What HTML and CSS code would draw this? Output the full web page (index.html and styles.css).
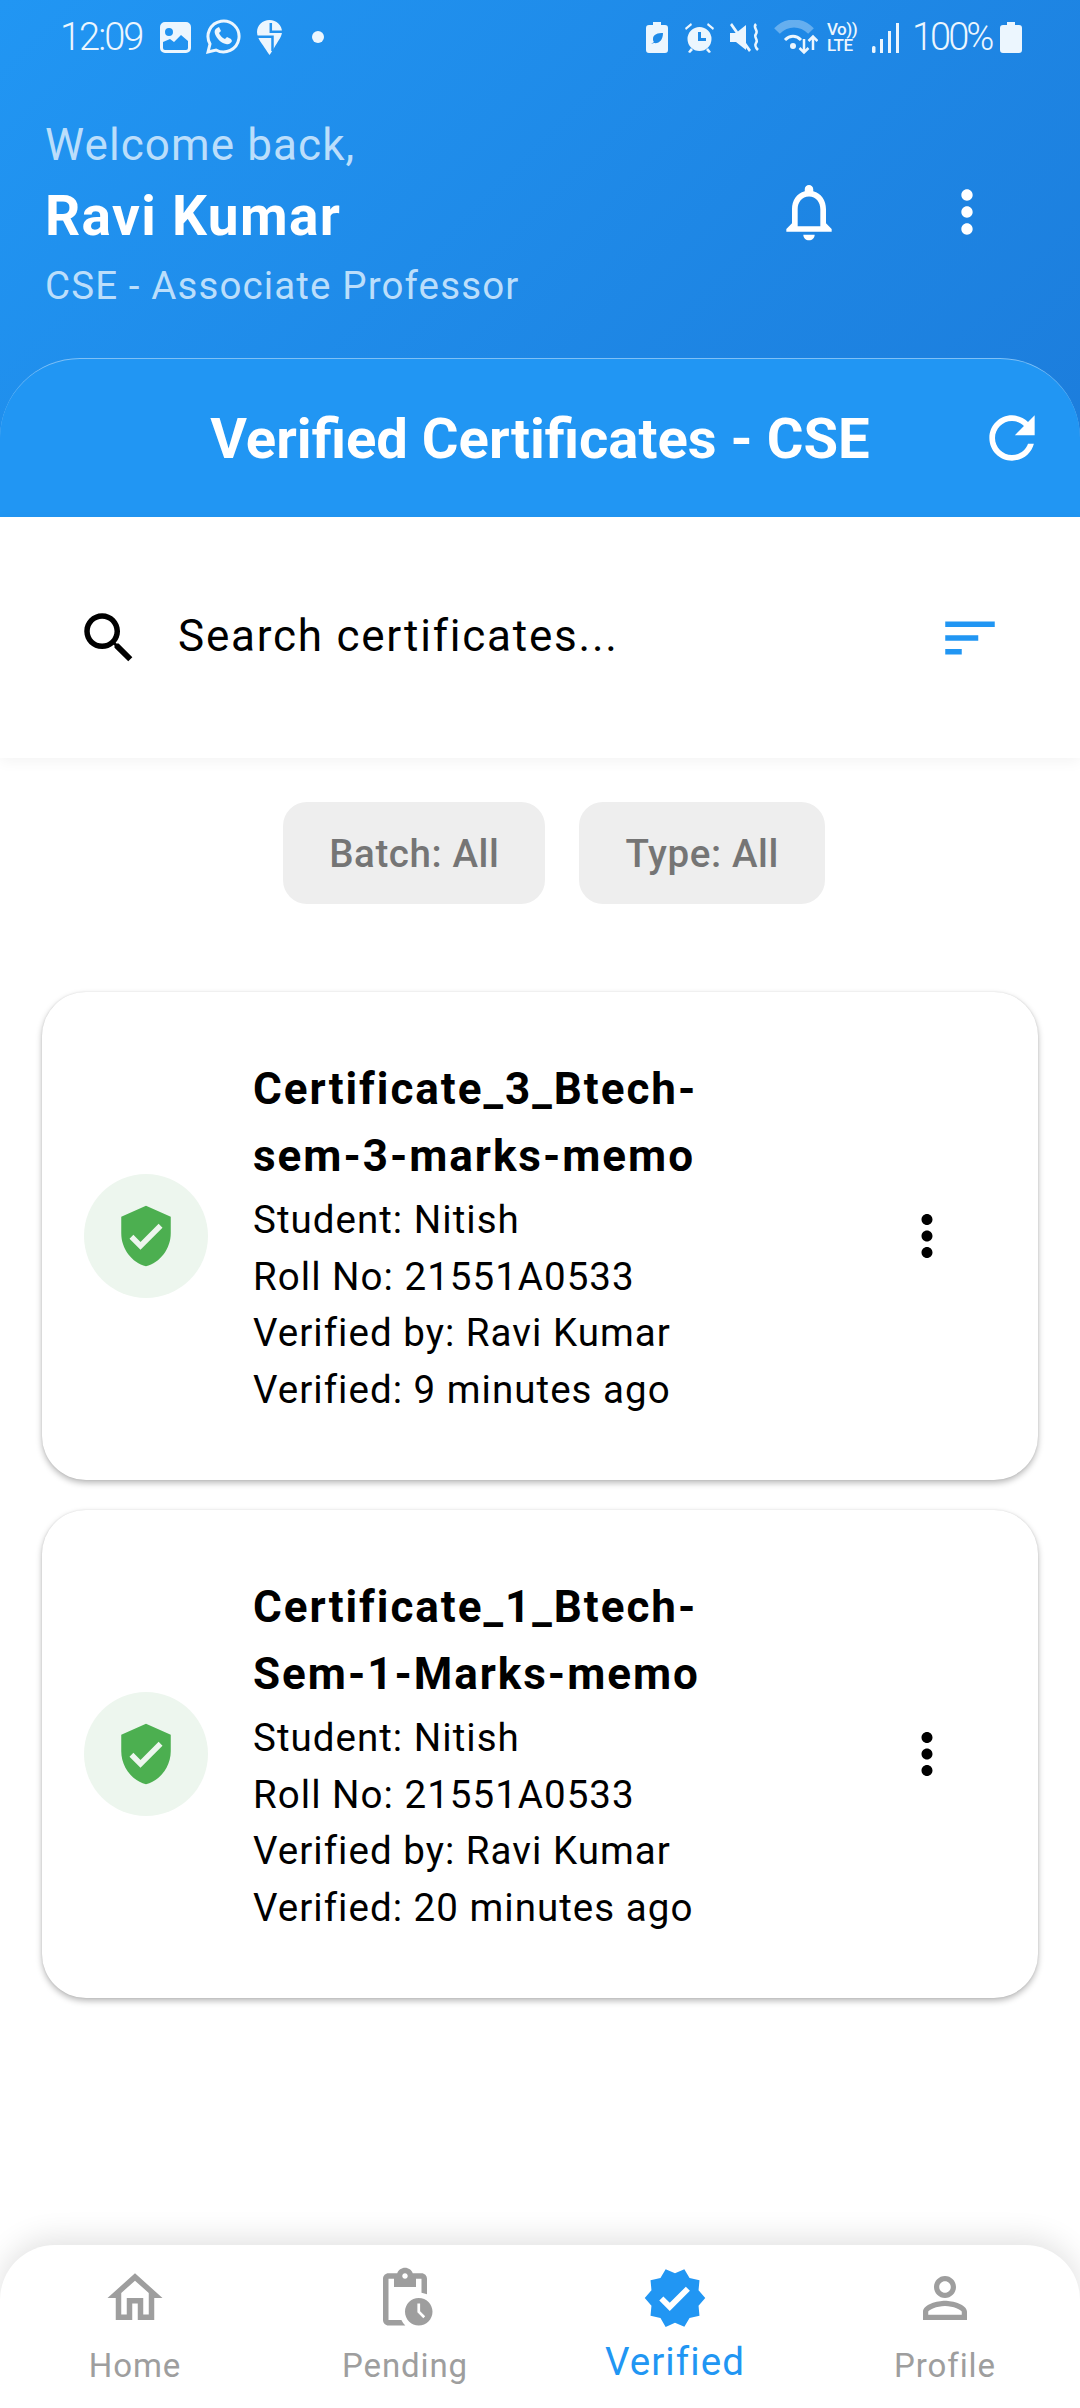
FILE: index.html
```html
<!DOCTYPE html>
<html lang="en">
<head>
  <meta charset="UTF-8" />
  <title>Verified Certificates</title>
  <link rel="stylesheet" href="styles.css">
</head>
<body>
  <header class="top">
    <div class="status">
      <span class="clock">12:09</span>
      <svg class="st st-img" viewBox="0 0 31 31"><path fill-rule="evenodd" d="M5 0h21a5 5 0 0 1 5 5v21a5 5 0 0 1-5 5H5a5 5 0 0 1-5-5V5a5 5 0 0 1 5-5zM9 6a4 4 0 1 0 0 8 4 4 0 0 0 0-8zM3 20v6a2 2 0 0 0 2 2h21a2 2 0 0 0 2-2v-7l-7-6-7 7-4-3z"/></svg>
      <svg class="st st-wa" viewBox="0 0 36 36"><path fill="none" stroke="currentColor" stroke-width="3" d="M3 33l2-8A15.500 15.500 0 1 1 11 31z"/><path d="M12 9c-2 1-3 3-2 6 2 5 6 9 11 10 3 1 5-1 6-3l-1-2-4-2-2 2c-3-1-5-4-6-6l2-2-2-4z"/></svg>
      <svg class="st st-sw" viewBox="0 0 25 35"><path d="M12.500 0C5.500 0 0 5 0 12c0 4 2 8 5 12 3 4 6 9 7.500 11 1.500-2 4-6 6-9.500 3-5 6.500-9.500 6.500-13.500C25 5 19.500 0 12.500 0z"/><path fill="none" stroke="#2192ef" stroke-width="2.500" d="M13.800 3v8.700H25M0 16.700h15.500V31"/></svg>
      <span class="st-dot"></span>
      <span class="status-gap"></span>
      <svg class="st st-eco" viewBox="0 0 22 31"><path fill-rule="evenodd" d="M7 0h8v3h4a3 3 0 0 1 3 3v22a3 3 0 0 1-3 3H3a3 3 0 0 1-3-3V6a3 3 0 0 1 3-3h4zM5 22l3-1c5 1 9-3 9-10-5 0-10 1-10 6 0 1 0 2 1 3z"/></svg>
      <svg class="st st-alarm" viewBox="0 0 29 31"><path fill-rule="evenodd" d="M14.500 5a12 12 0 1 1 0 24 12 12 0 0 1 0-24zM13 10v9h8v-3h-5v-6zM0 6l6-5 1 2-6 5zM29 6l-6-5-1 2 6 5zM3 30l3-4 2 2-3 3zM26 30l-3-4-2 2 3 3z"/></svg>
      <svg class="st st-mute" viewBox="0 0 30 31"><path d="M0 11h6L16 3v25L6 20H0zM0 3l2-2 19 27-2 2z"/><path fill="none" stroke="currentColor" stroke-width="2.500" d="M26 2c-4 4 3 6 0 10-3 3 3 6 0 9-2 3 0 5 2 7"/></svg>
      <svg class="st st-wifi" viewBox="0 0 44 35"><path fill="none" stroke="currentColor" stroke-width="8" opacity=".35" d="M3 11c10-10 24-10 34 0"/><path fill="none" stroke="currentColor" stroke-width="3" d="M11 20c5-5 11-5 16 0"/><circle cx="19" cy="26" r="3"/><path fill="none" stroke="currentColor" stroke-width="2.500" d="M30 19v14M25.500 28l4.500 4.500 4.500-4.500M39 30V16M34.500 21l4.500-4.500 4.500 4.500"/></svg>
      <span class="st-volte"><span>Vo))</span><span>LTE</span></span>
      <svg class="st st-sig" viewBox="0 0 27 31"><rect x="0" y="24" width="3.500" height="7" rx="1.500"/><rect x="8" y="17" width="3" height="14"/><rect x="16" y="9" width="3" height="22"/><rect x="24" y="1" width="3" height="30"/></svg>
      <span class="pct">100%</span>
      <svg class="st st-bat" viewBox="0 0 22 31"><path d="M7 0h8v3h4a3 3 0 0 1 3 3v22a3 3 0 0 1-3 3H3a3 3 0 0 1-3-3V6a3 3 0 0 1 3-3h4z"/></svg>
    </div>

    <div class="user">
      <div class="user-text">
        <div class="welcome">Welcome back,</div>
        <div class="name">Ravi Kumar</div>
        <div class="role">CSE - Associate Professor</div>
      </div>
      <svg class="ic-big bell" viewBox="0 0 24 24"><path d="M12 22c1.100 0 2-.9 2-2h-4c0 1.100.9 2 2 2zm6-6v-5c0-3.070-1.630-5.640-4.500-6.320V4c0-.83-.67-1.500-1.500-1.500s-1.500.67-1.500 1.500v.68C7.640 5.360 6 7.920 6 11v5l-2 2v1h16v-1l-2-2zm-2 1H8v-6c0-2.480 1.510-4.500 4-4.500s4 2.020 4 4.500v6z"/></svg>
      <svg class="ic-big dots" viewBox="0 0 24 24"><path d="M12 8c1.100 0 2-.9 2-2s-.9-2-2-2-2 .9-2 2 .9 2 2 2zm0 2c-1.100 0-2 .9-2 2s.9 2 2 2 2-.9 2-2-.9-2-2-2zm0 6c-1.100 0-2 .9-2 2s.9 2 2 2 2-.9 2-2-.9-2-2-2z"/></svg>
    </div>

    <div class="panel">
      <span></span>
      <h1>Verified Certificates - CSE</h1>
      <svg class="ic-big refresh" viewBox="0 0 24 24"><path d="M17.650 6.350C16.200 4.900 14.210 4 12 4c-4.420 0-7.990 3.580-7.990 8s3.570 8 7.990 8c3.730 0 6.840-2.550 7.730-6h-2.080c-.82 2.330-3.040 4-5.650 4-3.310 0-6-2.690-6-6s2.690-6 6-6c1.660 0 3.140.69 4.220 1.780L13 11h7V4l-2.350 2.350z"/></svg>
    </div>
  </header>

  <div class="search">
    <svg class="ic-search" viewBox="0 0 24 24"><path d="M15.500 14h-.79l-.28-.27C15.410 12.590 16 11.110 16 9.500 16 5.910 13.090 3 9.500 3S3 5.910 3 9.500 5.910 16 9.500 16c1.610 0 3.090-.59 4.230-1.570l.27.28v.79l5 4.990L20.490 19l-4.990-5zm-6 0C7.010 14 5 11.990 5 9.500S7.010 5 9.500 5 14 7.010 14 9.500 11.990 14 9.500 14z"/></svg>
    <span class="search-text">Search certificates...</span>
    <svg class="ic-sort" viewBox="0 0 24 24"><path d="M3 18h6v-2H3v2zM3 6v2h18V6H3zm0 7h12v-2H3v2z"/></svg>
  </div>

  <div class="chips">
    <span class="chip">Batch: All</span>
    <span class="chip">Type: All</span>
  </div>

  <main class="list">
    <article class="card">
      <div class="badge">
        <svg viewBox="0 0 24 24"><path d="M12 1L3 5v6c0 5.550 3.840 10.740 9 12 5.160-1.260 9-6.450 9-12V5l-9-4zm-2 16l-4-4 1.410-1.410L10 14.170l6.590-6.590L18 9l-8 8z"/></svg>
      </div>
      <div class="info">
        <h2>Certificate_3_Btech-<br>sem-3-marks-memo</h2>
        <p>Student: Nitish</p>
        <p>Roll No: 21551A0533</p>
        <p>Verified by: Ravi Kumar</p>
        <p>Verified: 9 minutes ago</p>
      </div>
      <svg class="card-more" viewBox="0 0 24 24"><path d="M12 8c1.100 0 2-.9 2-2s-.9-2-2-2-2 .9-2 2 .9 2 2 2zm0 2c-1.100 0-2 .9-2 2s.9 2 2 2 2-.9 2-2-.9-2-2-2zm0 6c-1.100 0-2 .9-2 2s.9 2 2 2 2-.9 2-2-.9-2-2-2z"/></svg>
    </article>

    <article class="card">
      <div class="badge">
        <svg viewBox="0 0 24 24"><path d="M12 1L3 5v6c0 5.550 3.840 10.740 9 12 5.160-1.260 9-6.450 9-12V5l-9-4zm-2 16l-4-4 1.410-1.410L10 14.170l6.590-6.590L18 9l-8 8z"/></svg>
      </div>
      <div class="info">
        <h2>Certificate_1_Btech-<br>Sem-1-Marks-memo</h2>
        <p>Student: Nitish</p>
        <p>Roll No: 21551A0533</p>
        <p>Verified by: Ravi Kumar</p>
        <p>Verified: 20 minutes ago</p>
      </div>
      <svg class="card-more" viewBox="0 0 24 24"><path d="M12 8c1.100 0 2-.9 2-2s-.9-2-2-2-2 .9-2 2 .9 2 2 2zm0 2c-1.100 0-2 .9-2 2s.9 2 2 2 2-.9 2-2-.9-2-2-2zm0 6c-1.100 0-2 .9-2 2s.9 2 2 2 2-.9 2-2-.9-2-2-2z"/></svg>
    </article>
  </main>

  <nav class="tabs">
    <div class="tab">
      <svg viewBox="0 0 24 24"><path d="M12 5.690l5 4.500V18h-2v-6H9v6H7v-7.810l5-4.500M12 3L2 12h3v8h6v-6h2v6h6v-8h3L12 3z"/></svg>
      <span>Home</span>
    </div>
    <div class="tab">
      <svg viewBox="0 0 24 24"><path d="M17 12c-2.760 0-5 2.240-5 5s2.240 5 5 5 5-2.240 5-5-2.240-5-5-5zm1.650 7.350L16.500 17.200V14h1v2.790l1.850 1.850-.7.710zM18 3h-3.180C14.400 1.840 13.300 1 12 1s-2.400.84-2.820 2H6c-1.100 0-2 .9-2 2v15c0 1.100.9 2 2 2h6.110c-.59-.57-1.070-1.250-1.420-2H6V5h2v3h8V5h2v5.080c.71.1 1.380.31 2 .6V5c0-1.100-.9-2-2-2zm-6 2c-.55 0-1-.45-1-1s.45-1 1-1 1 .45 1 1-.45 1-1 1z"/></svg>
      <span>Pending</span>
    </div>
    <div class="tab active">
      <svg viewBox="0 0 24 24"><path d="M23 12l-2.440-2.790.34-3.690-3.610-.82-1.890-3.200L12 2.960 8.600 1.500 6.710 4.690 3.100 5.500l.34 3.700L1 12l2.440 2.790-.34 3.700 3.610.82L8.600 22.500l3.400-1.470 3.400 1.460 1.890-3.190 3.610-.82-.34-3.690L23 12zm-12.910 4.720l-3.800-3.810 1.480-1.480 2.320 2.330 5.850-5.870 1.480 1.480-7.330 7.350z"/></svg>
      <span>Verified</span>
    </div>
    <div class="tab">
      <svg viewBox="0 0 24 24"><path d="M12 5.900c1.160 0 2.100.94 2.100 2.100s-.94 2.100-2.100 2.100S9.900 9.160 9.900 8s.94-2.100 2.100-2.100m0 9c2.970 0 6.100 1.460 6.100 2.100v1.100H5.900V17c0-.64 3.130-2.100 6.100-2.100M12 4C9.790 4 8 5.790 8 8s1.790 4 4 4 4-1.790 4-4-1.790-4-4-4zm0 9c-2.670 0-8 1.340-8 4v3h16v-3c0-2.660-5.330-4-8-4z"/></svg>
      <span>Profile</span>
    </div>
  </nav>
</body>
</html>
```

FILE: styles.css
```css
html, body {
  margin: 0;
  padding: 0;
  height: 100%;
  overflow: hidden;
  font-family: Roboto, sans-serif;
  background: #fff;
}

body {
  display: flex;
  flex-direction: column;
  width: 1080px;
  height: 2408px;
}

h1, h2, p {
  margin: 0;
}

svg {
  display: block;
  fill: currentColor;
  flex: none;
}

/* header */
.top {
  background: linear-gradient(135deg, #2196f3 0%, #1c7cdb 100%);
  color: #fff;
}

.status {
  display: flex;
  align-items: center;
  height: 74px;
  padding: 0 58px 0 60px;
  color: #ecf6fe;
}

.clock {
  font-size: 38px;
  font-weight: 300;
  letter-spacing: -2px;
  width: 100px;
}

.pct {
  font-size: 38px;
  font-weight: 300;
  letter-spacing: -3px;
  width: 88px;
  margin-left: 13px;
}

.st-img { width: 31px; height: 31px; }
.st-wa { width: 36px; height: 36px; margin-left: 14px; }
.st-sw { width: 25px; height: 35px; margin-left: 16px; }
.st-dot { width: 12px; height: 12px; border-radius: 50%; background: #ecf6fe; margin-left: 30px; }
.status-gap { flex: 1; }
.st-eco { width: 22px; height: 31px; }
.st-alarm { width: 29px; height: 31px; margin-left: 17px; }
.st-mute { width: 30px; height: 31px; margin-left: 16px; }
.st-wifi { width: 44px; height: 35px; margin-left: 14px; }
.st-sig { width: 27px; height: 31px; margin-left: 14px; }
.st-bat { width: 22px; height: 31px; margin-left: 0; }

.st-volte {
  display: flex;
  flex-direction: column;
  width: 31px;
  margin-left: 9px;
  font-size: 17px;
  font-weight: 500;
  line-height: 16px;
  letter-spacing: -.5px;
  white-space: nowrap;
}

.user {
  display: flex;
  align-items: center;
  height: 284px;
  padding: 0 0 0 45px;
  box-sizing: border-box;
}

.user-text {
  flex: 1;
  margin-top: -3px;
}

.welcome {
  font-size: 44px;
  line-height: 64px;
  letter-spacing: 1.100px;
  color: #bbdefb;
}

.name {
  font-size: 55px;
  font-weight: 700;
  line-height: 78px;
  letter-spacing: 1.350px;
}

.role {
  font-size: 38.500px;
  line-height: 62px;
  letter-spacing: 1.120px;
  color: #bbdefb;
}

.ic-big {
  width: 68px;
  height: 68px;
}

.bell {
  margin-right: 90px;
  margin-top: -9px;
}

.dots {
  margin-right: 79px;
  margin-top: -9px;
}

.panel {
  display: grid;
  grid-template-columns: 1fr auto 1fr;
  align-items: center;
  height: 160px;
  box-sizing: border-box;
  background: #2196f3;
  border-top: 1px solid #7fc0f6;
  border-bottom: 1px solid #90caf9;
  border-radius: 80px 80px 0 0;
  margin-bottom: -1px;
}

.panel h1 {
  font-size: 56.200px;
  font-weight: 700;
  line-height: 102px;
  margin-top: 2px;
}

.refresh {
  justify-self: end;
  margin-right: 34px;
}

/* search */
.search {
  display: flex;
  align-items: center;
  height: 241px;
  padding: 0 76px;
  background: #fff;
  box-shadow: 0 3px 14px rgba(0, 0, 0, .05);
}

.ic-search {
  width: 66px;
  height: 66px;
  color: #000;
}

.search-text {
  flex: 1;
  margin-left: 36px;
  margin-bottom: 4px;
  font-size: 44px;
  letter-spacing: 1.770px;
  color: #000;
}

.ic-sort {
  width: 68px;
  height: 66px;
  color: #2196f3;
}

/* filters */
.chips {
  display: flex;
  justify-content: center;
  gap: 34px;
  margin-top: 44px;
  padding-left: 28px;
}

.chip {
  display: flex;
  align-items: center;
  height: 102px;
  padding: 0 46px;
  background: #eee;
  border-radius: 24px;
  font-size: 38.500px;
  font-weight: 500;
  letter-spacing: .6px;
  color: #757575;
}

/* cards */
.list {
  display: flex;
  flex-direction: column;
  gap: 30px;
  margin: 88px 42px 0;
}

.card {
  display: flex;
  align-items: center;
  height: 488px;
  box-sizing: border-box;
  padding: 0 76px 0 42px;
  background: #fff;
  border-radius: 44px;
  box-shadow: 0 3px 6px rgba(0, 0, 0, .28), 0 0 2px rgba(0, 0, 0, .1);
}

.badge {
  display: flex;
  align-items: center;
  justify-content: center;
  width: 124px;
  height: 124px;
  border-radius: 50%;
  background: #edf6ee;
  color: #4caf50;
}

.badge svg {
  width: 66px;
  height: 66px;
}

.info {
  flex: 1;
  margin-left: 45px;
  color: #000;
}

.info h2 {
  font-size: 44px;
  font-weight: 700;
  line-height: 67px;
  letter-spacing: 1.970px;
  margin-top: 2px;
  margin-bottom: 2px;
}

.info p {
  font-size: 38.500px;
  line-height: 56.500px;
  letter-spacing: 1.030px;
}

.card-more {
  width: 66px;
  height: 66px;
  margin-right: 2px;
  margin-left: -2px;
  color: #000;
}

/* bottom nav */
.tabs {
  display: grid;
  grid-template-columns: repeat(4, 1fr);
  margin-top: auto;
  height: 163px;
  background: #fff;
  border-radius: 55px 55px 0 0;
  box-shadow: 0 -6px 30px rgba(0, 0, 0, .12);
  color: #9e9e9e;
}

.tab {
  display: flex;
  flex-direction: column;
  align-items: center;
  padding-top: 20px;
}

.tab svg {
  width: 66px;
  height: 66px;
}

.tab span {
  font-size: 33px;
  line-height: 40px;
  margin-top: 15px;
  letter-spacing: .9px;
}

.tab.active {
  color: #2196f3;
}

.tab.active span {
  font-size: 38.500px;
  line-height: 46px;
  margin-top: 8px;
  letter-spacing: 1.100px;
}
```
